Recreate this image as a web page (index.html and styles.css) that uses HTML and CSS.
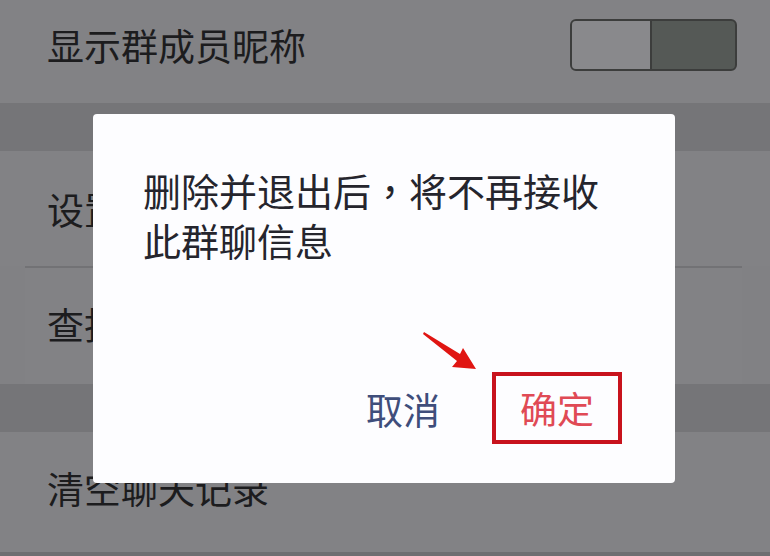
FILE: index.html
```html
<!DOCTYPE html>
<html lang="zh-CN">
<head>
    <meta charset="UTF-8">
    <title>聊天信息</title>
    <link rel="stylesheet" href="styles.css">
</head>
<body>
    <div class="page">
        <div class="row first">
            <span>显示群成员昵称</span>
            <div class="toggle"><div class="knob"></div></div>
        </div>
        <div class="band"></div>
        <div class="row mid">设置当前聊天背景</div>
        <div class="row mid">查找聊天记录</div>
        <div class="band"></div>
        <div class="row last">清空聊天记录</div>
        <div class="band thin"></div>
    </div>

    <!-- dialog over the dimmed page -->
    <div class="dialog">
        <p class="msg">删除并退出后<span class="comma" lang="zh-TW">，</span>将不再接收此群聊信息</p>
        <div class="actions">
            <span class="btn cancel">取消</span>
            <span class="btn ok">确定</span>
        </div>
        <svg class="arrow" width="60" height="44" viewBox="0 0 60 44">
            <path d="M1 2 L2 0 L38 22 L41 16 L54 37 L30 35 L35 29 Z" fill="#e01512"/>
        </svg>
    </div>
</body>
</html>
```

FILE: styles.css
```css
body {
    margin: 0;
    width: 770px;
    height: 556px;
    overflow: hidden;
    background-color: #818184;
    font-family: "Noto Sans CJK SC", "Noto Sans", sans-serif;
}
.page {
    display: flex;
    flex-direction: column;
    height: 556px;
}
.row {
    display: flex;
    align-items: center;
    justify-content: space-between;
    padding-left: 47px;
    padding-right: 33px;
    font-size: 37px;
    color: #1c1c1e;
    background-color: #828285;
}
.row.first {
    height: 89px;
    padding-bottom: 14px;
}
.row.mid {
    height: 115px;
}
.row.mid + .row.mid {
    border-top: 2px solid #727275;
    margin: 0 28px 0 25px;
    padding-left: 22px;
    height: 112px;
    padding-bottom: 4px;
}
.row.last {
    height: 112px;
    padding-bottom: 8px;
}
.band {
    height: 48px;
    background-color: #757578;
}
.band.thin {
    height: 4px;
    background-color: #6e6e71;
}
.toggle {
    width: 163px;
    height: 48px;
    border: 2px solid #3c3d3c;
    border-radius: 6px;
    background-color: #555956;
    display: flex;
}
.knob {
    width: 78px;
    height: 48px;
    background-color: #89898c;
    border-right: 2px solid #3c3d3c;
    border-radius: 4px 0 0 4px;
}
.dialog {
    position: absolute;
    left: 93px;
    top: 114px;
    width: 582px;
    height: 369px;
    background-color: #fdfdff;
    border-radius: 4px;
    box-sizing: border-box;
    padding: 51px 53px 39px 50px;
    display: flex;
    flex-direction: column;
    justify-content: space-between;
}
.msg {
    margin: 0;
    font-size: 38px;
    line-height: 50px;
    color: #25252d;
}
.comma {
    font-family: "Noto Sans CJK TC", sans-serif;
}
.actions {
    display: flex;
    justify-content: flex-end;
    align-items: center;
    gap: 52px;
}
.btn {
    font-size: 37px;
    line-height: 42px;
}
.cancel {
    color: #3f4e7b;
    padding-top: 2px;
}
.ok {
    color: #e04a55;
    border: 4px solid #c8131d;
    width: 122px;
    height: 64px;
    display: flex;
    align-items: center;
    justify-content: center;
}
.arrow {
    position: absolute;
    left: 329px;
    top: 218px;
}
```
